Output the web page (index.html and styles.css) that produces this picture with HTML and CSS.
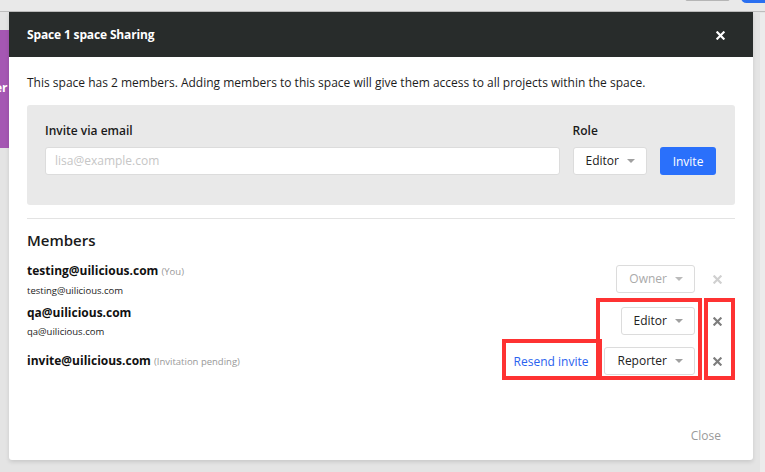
FILE: index.html
```html
<!DOCTYPE html>
<html>
<head>
<meta charset="utf-8">
<link rel="stylesheet" href="styles.css">
</head>
<body>
<div class="page">
  <div class="topbar">
    <span class="top-btn"></span>
    <span class="top-blue"></span>
  </div>
  <div class="side-tab"><span>er</span></div>
  <div class="scroll-strip"></div>

  <div class="modal">
    <div class="modal-header">
      <h1 class="modal-title">Space 1 space Sharing</h1>
      <svg class="close-x" viewBox="0 0 10 10" width="9" height="9"><path d="M1.5 1.5L8.5 8.5M8.5 1.5L1.5 8.5" stroke="#fff" stroke-width="2.4" stroke-linecap="square"/></svg>
    </div>
    <div class="modal-body">
      <p class="intro">This space has 2 members. Adding members to this space will give them access to all projects within the space.</p>
      <div class="invite-box">
        <div class="field field-email">
          <label class="label">Invite via email</label>
          <div class="input placeholder">lisa@example.com</div>
        </div>
        <div class="field field-role">
          <label class="label">Role</label>
          <div class="role-row">
            <div class="select sel-role">Editor <span class="caret"></span></div>
            <button class="btn-invite">Invite</button>
          </div>
        </div>
      </div>
      <hr class="divider">
      <h2 class="members-title">Members</h2>
      <div class="member member-1">
        <div class="member-info">
          <div class="member-name">testing@uilicious.com <span class="tag">(You)</span></div>
          <div class="member-sub">testing@uilicious.com</div>
        </div>
        <div class="member-actions">
          <div class="select disabled">Owner <span class="caret"></span></div>
          <svg class="rm" viewBox="0 0 10 10" width="9" height="9"><path d="M1.5 1.5L8.5 8.5M8.5 1.5L1.5 8.5" stroke="#d0d0d0" stroke-width="2.4" stroke-linecap="square"/></svg>
        </div>
      </div>
      <div class="member member-2">
        <div class="member-info">
          <div class="member-name">qa@uilicious.com</div>
          <div class="member-sub">qa@uilicious.com</div>
        </div>
        <div class="member-actions">
          <div class="select">Editor <span class="caret"></span></div>
          <svg class="rm" viewBox="0 0 10 10" width="9" height="9"><path d="M1.5 1.5L8.5 8.5M8.5 1.5L1.5 8.5" stroke="#7d7d7d" stroke-width="2.4" stroke-linecap="square"/></svg>
        </div>
      </div>
      <div class="member member-3">
        <div class="member-info">
          <div class="member-name">invite@uilicious.com <span class="tag">(Invitation pending)</span></div>
        </div>
        <div class="member-actions">
          <a class="resend">Resend invite</a>
          <div class="select">Reporter <span class="caret"></span></div>
          <svg class="rm" viewBox="0 0 10 10" width="9" height="9"><path d="M1.5 1.5L8.5 8.5M8.5 1.5L1.5 8.5" stroke="#7d7d7d" stroke-width="2.4" stroke-linecap="square"/></svg>
        </div>
      </div>
    </div>
    <div class="modal-footer">
      <a class="close-link">Close</a>
    </div>

    <div class="mark mark-resend"></div>
    <div class="mark mark-role"></div>
    <div class="mark mark-remove"></div>
  </div>
</div>
</body>
</html>
```
FILE: styles.css
```css
* { box-sizing: border-box; }
html, body { margin: 0; padding: 0; }
body {
  width: 765px;
  height: 472px;
  overflow: hidden;
  background: #e4e4e4;
  font-family: "Open Sans", "Noto Sans", sans-serif;
  color: #222;
}
.page { position: relative; width: 765px; height: 472px; }

.topbar {
  height: 12px;
  background: #e9e9e9;
  border-bottom: 1px solid #bdbdbd;
  position: relative;
}
.top-btn {
  position: absolute; left: 685px; top: -4px; width: 45px; height: 5px;
  border: 1px solid #b5b5b5; border-radius: 2px; background: #e9e9e9;
}
.top-blue {
  position: absolute; left: 741px; top: -8px; width: 40px; height: 11px;
  background: #2a6ff0; border-radius: 6px;
}
.side-tab {
  position: absolute; left: 0; top: 30px; width: 9px; height: 118px;
  background: #a557b3; overflow: hidden;
}
.side-tab span {
  position: absolute; left: -5px; top: 49px;
  color: #fff; font-weight: 700; font-size: 12px;
}
.scroll-strip {
  position: absolute; left: 760px; top: 13px; width: 5px; height: 459px;
  background: #ececec;
}

.modal {
  position: absolute; left: 9px; top: 12px; width: 744px; height: 448px;
  background: #fff;
  border-radius: 0 0 3px 3px;
  box-shadow: 0 2px 4px rgba(0,0,0,0.12);
  display: flex; flex-direction: column;
}
.modal-header {
  height: 45px;
  background: #282c2b;
  display: flex; align-items: center; justify-content: space-between;
  padding: 0 28px 0 18px;
}
.modal-title {
  margin: 0;
  color: #fff;
  font-size: 12px;
  font-weight: 700;
  letter-spacing: -0.15px;
  line-height: 18px;
}
.close-x { margin-top: 2px; }

.modal-body { padding: 17px 18px 0; flex: 1; }
.intro { margin: 0; font-size: 12px; line-height: 18px; color: #1c1c1c; }

.invite-box {
  margin-top: 13px;
  background: #e9e9e9;
  border-radius: 3px;
  height: 100px;
  padding: 17px 19px 0 18px;
  display: flex; gap: 13px;
}
.field { display: flex; flex-direction: column; }
.field-email { flex: 1; }
.label { font-size: 12px; font-weight: 600; line-height: 18px; color: #1a1a1a; margin-bottom: 7px; }
.input {
  height: 28px; background: #fff; border: 1px solid #dcdcdc; border-radius: 3px;
  padding: 0 9px; font-size: 12px; line-height: 26px;
}
.placeholder { color: #c6c6c6; }
.role-row { display: flex; gap: 13px; }
.select {
  height: 28px; background: #fff; border: 1px solid #dcdcdc; border-radius: 3px;
  font-size: 12px; line-height: 26px; color: #222;
  display: flex; align-items: center;
  padding: 0 11px 0 12px;
}
.caret {
  width: 0; height: 0;
  border-left: 4px solid transparent; border-right: 4px solid transparent;
  border-top: 4px solid #a0a0a0;
  margin-left: 8px;
}
.btn-invite {
  width: 56px; height: 28px; border: none; border-radius: 3px;
  background: #2a70fb; color: #fff;
  font-family: inherit; font-size: 12px; padding: 0;
}

.divider { border: none; border-top: 1px solid #e3e3e3; margin: 13px 0 0; }
.members-title {
  margin: 10px 0 0; font-size: 15px; font-weight: 600; line-height: 22px; color: #1a1a1a;
}
.members-title + .member { margin-top: 7px; }

.member { display: flex; align-items: center; justify-content: space-between; }
.member-1, .member-2 { height: 42px; }
.member-3 { height: 38px; }
.member-1 .member-info { padding-top: 4px; }
.member-2 .member-info { padding-top: 2px; }
.member-name { font-size: 12px; font-weight: 700; line-height: 18px; color: #111; }
.member-sub { font-size: 9.5px; line-height: 19px; color: #222; }
.tag { font-size: 9.5px; font-weight: 400; color: #999; }
.member-actions { display: flex; align-items: center; }
.rm { margin-left: 18px; margin-right: 13px; }
.disabled { color: #aaa; }
.disabled .caret { border-top-color: #bbb; }
.resend { color: #2a62ef; font-size: 12px; margin-right: 16px; }

.modal-footer {
  height: 70px;
  display: flex; justify-content: flex-end; align-items: center;
  padding: 20px 32px 0 0;
}
.close-link { color: #9a9a9a; font-size: 12px; }

.mark { position: absolute; border: 4px solid #fe3232; }
.mark-resend { left: 493px; top: 327px; width: 100px; height: 41px; }
.mark-role { left: 587px; top: 286px; width: 106px; height: 82px; }
.mark-remove { left: 695px; top: 286px; width: 31px; height: 82px; }
```
